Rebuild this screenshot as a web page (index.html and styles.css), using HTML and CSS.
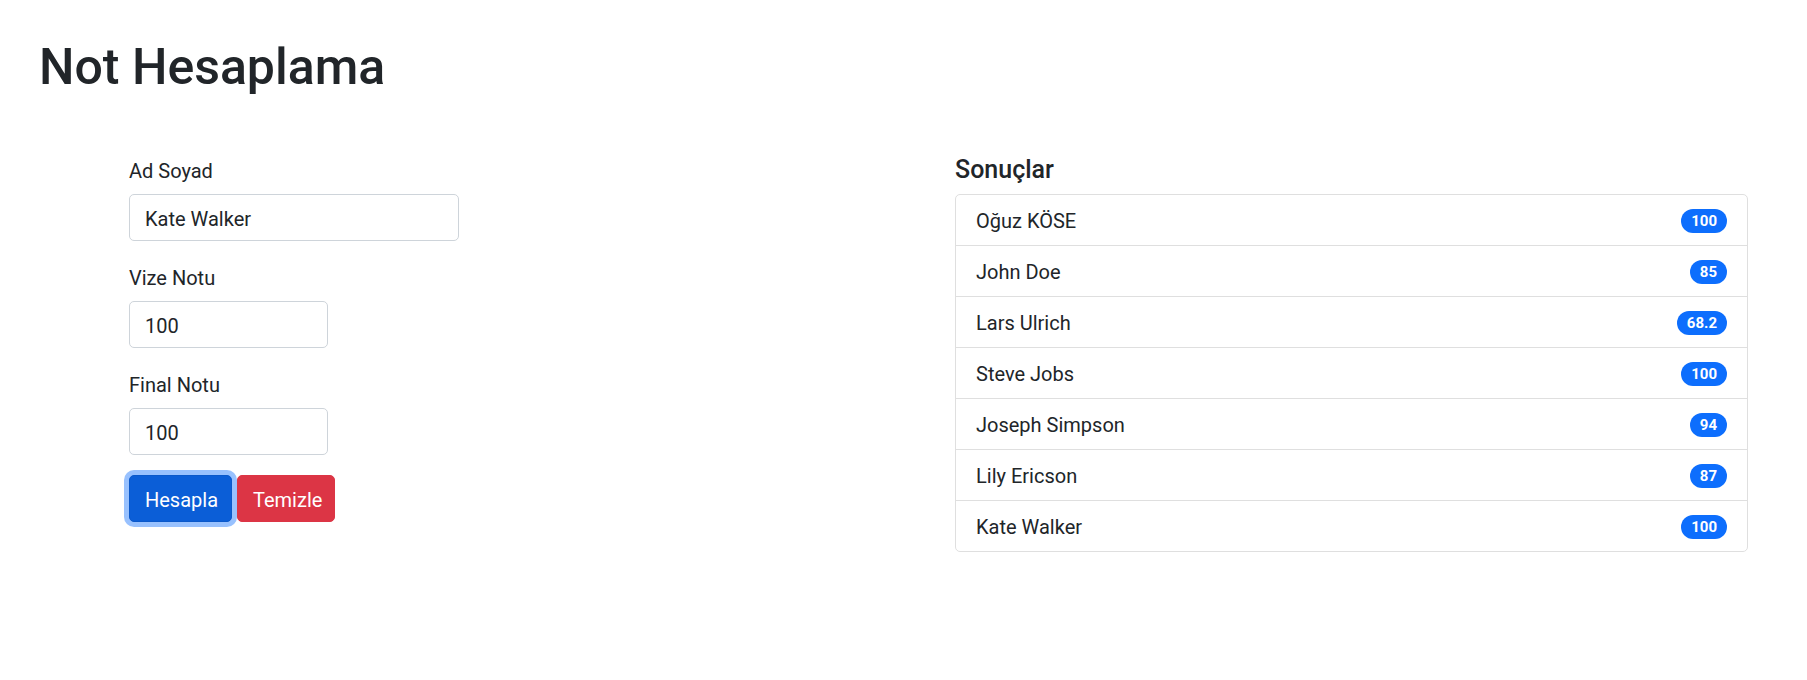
FILE: index.html
```
<!DOCTYPE html>
<html lang="tr">
<head>
<meta charset="utf-8">
<title>Not Hesaplama</title>
<link rel="stylesheet" href="styles.css">
</head>
<body>
<div class="page">
  <h1 class="title">Not Hesaplama</h1>
  <div class="row">
    <form class="form-col">
      <div class="field">
        <label class="label">Ad Soyad</label>
        <input class="input input-wide" type="text" value="Kate Walker">
      </div>
      <div class="field">
        <label class="label">Vize Notu</label>
        <input class="input input-narrow" type="text" value="100">
      </div>
      <div class="field">
        <label class="label">Final Notu</label>
        <input class="input input-narrow" type="text" value="100">
      </div>
      <div class="actions">
        <button type="button" class="btn btn-primary">Hesapla</button>
        <button type="button" class="btn btn-danger">Temizle</button>
      </div>
    </form>
    <div class="results-col">
      <h5 class="results-title">Sonuçlar</h5>
      <ul class="list">
        <li class="item"><span>Oğuz KÖSE</span><span class="badge">100</span></li>
        <li class="item"><span>John Doe</span><span class="badge">85</span></li>
        <li class="item"><span>Lars Ulrich</span><span class="badge">68.2</span></li>
        <li class="item"><span>Steve Jobs</span><span class="badge">100</span></li>
        <li class="item"><span>Joseph Simpson</span><span class="badge">94</span></li>
        <li class="item"><span>Lily Ericson</span><span class="badge">87</span></li>
        <li class="item"><span>Kate Walker</span><span class="badge">100</span></li>
      </ul>
    </div>
  </div>
</div>
</body>
</html>
```
FILE: styles.css
```
* { box-sizing: border-box; }
html, body { margin: 0; padding: 0; background: #fff; }
body {
  font-family: Roboto, "Liberation Sans", sans-serif;
  font-size: 20px;
  line-height: 1.5;
  color: #212529;
}
.page { padding: 37px 0 0 0; }
.title {
  margin: 0 0 57px 39px;
  font-size: 50px;
  font-weight: 500;
  line-height: 1.2;
}
.row {
  display: grid;
  grid-template-columns: 826px 793px;
  padding-left: 129px;
}
.form-col { margin: 0; }
.field { margin-bottom: 20px; }
.label { display: block; padding-top: 2px; margin-bottom: 8px; line-height: 30px; }
.input {
  display: block;
  height: 47px;
  padding: 8px 15px 6px;
  font: inherit;
  line-height: 30px;
  color: #212529;
  background: #fff;
  border: 1px solid #ced4da;
  border-radius: 5px;
  outline: none;
}
.input-wide { width: 330px; }
.input-narrow { width: 199px; }
.actions { display: flex; gap: 5px; margin-top: 1px; }
.btn {
  height: 47px;
  padding: 8px 15px 6px;
  font: inherit;
  line-height: 30px;
  color: #fff;
  border: 1px solid transparent;
  border-radius: 5px;
}
.btn-primary {
  width: 103px;
  background: #0b5ed7;
  border-color: #0a58ca;
  box-shadow: 0 0 0 5px rgba(49, 132, 253, 0.5);
}
.btn-danger {
  width: 98px;
  background: #dc3545;
  border-color: #dc3545;
}
.results-title {
  margin: 0 0 10px 0;
  padding-top: 1px;
  height: 30px;
  font-size: 25px;
  font-weight: 500;
  line-height: 30px;
}
.list {
  list-style: none;
  margin: 0;
  padding: 0;
  border: 1px solid #dfdfdf;
  border-radius: 5px;
}
.item {
  display: flex;
  justify-content: space-between;
  align-items: center;
  padding: 11px 20px 9px;
  min-height: 51px;
  line-height: 30px;
  border-top: 1px solid #dfdfdf;
}
.item:first-child { border-top: 0; min-height: 50px; }
.badge {
  display: inline-block;
  margin-top: -1px;
  padding: 5px 10px 4px;
  font-size: 15px;
  font-weight: 700;
  line-height: 1;
  color: #fff;
  background: #0d6efd;
  border-radius: 50rem;
}
```
